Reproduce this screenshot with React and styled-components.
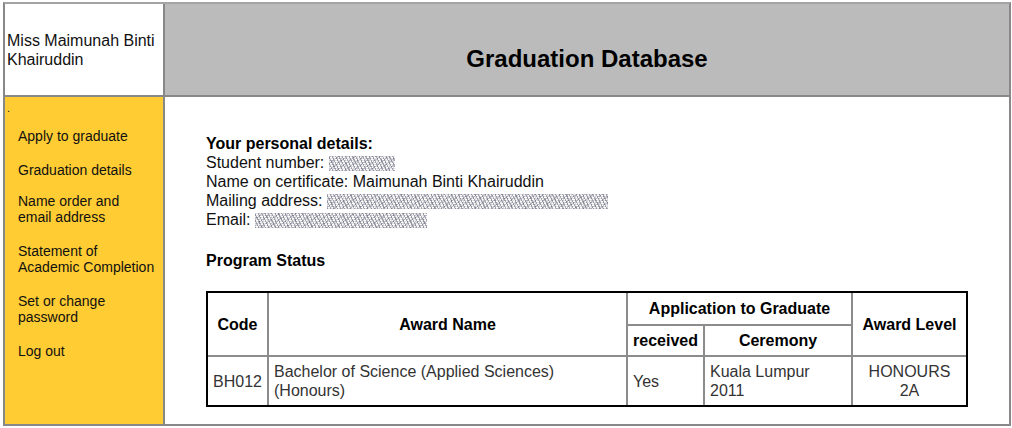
import React from "react";
import styled, { createGlobalStyle } from "styled-components";

const GlobalStyle = createGlobalStyle`
	html, body {
		margin: 0;
		background: #fff;
	}
	body {
		padding: 2px 0 0 3px;
		font-family: Arial, "Liberation Sans", sans-serif;
		color: #111;
	}
`

const Frame = styled.div`
	box-sizing: border-box;
	width: 1008px;
	height: 424px;
	display: grid;
	grid-template-columns: 158px 1fr;
	grid-template-rows: 91px 1fr;
	gap: 2px;
	background: #888;
	border: 2px solid #888;
	border-top-color: #a4a4a4;
`

const UserCell = styled.div`
	background: #fff;
	display: flex;
	align-items: center;
	padding: 0 2px;
	font-size: 16px;
	line-height: 19px;
`

const TitleCell = styled.div`
	background: #bbb;
	display: flex;
	align-items: center;
	justify-content: center;
	padding-top: 18px;
`

const Title = styled.h1`
	margin: 0;
	font-size: 24px;
	font-weight: bold;
	color: #000;
`

const Sidebar = styled.div`
	background: #ffcc33;
	padding: 2px;
	font-size: 14px;
	line-height: 16px;
`

const Dot = styled.div`
	font-size: 11px;
	line-height: 12px;
	padding-top: 3px;
`

const Menu = styled.nav`
	margin: 14px 0 0 11px;
	display: flex;
	flex-direction: column;
	gap: 18px;
`

const MenuItem = styled.a`
	display: block;
	color: #111;
	text-decoration: none;
	cursor: pointer;
	margin-top: ${props => props.$shift || 0}px;
`

const Main = styled.div`
	background: #fff;
	padding: 37px 0 0 41px;
	font-size: 16px;
	line-height: 19px;
`

const Heading = styled.div`
	font-weight: bold;
	color: #000;
	margin-top: ${props => props.$gap || 0}px;
`

const Line = styled.div``

const Blur = styled.span`
	display: inline-block;
	width: ${props => props.$w}px;
	height: 15px;
	vertical-align: -3px;
	background:
		repeating-linear-gradient(63deg, rgba(70, 70, 90, 0.45) 0 1px, transparent 1px 3px),
		repeating-linear-gradient(-37deg, rgba(120, 120, 150, 0.4) 0 1px, transparent 1px 5px),
		repeating-linear-gradient(90deg, rgba(150, 150, 160, 0.3) 0 1px, transparent 1px 4px),
		repeating-linear-gradient(0deg, rgba(160, 160, 170, 0.3) 0 1px, transparent 1px 2px);
`

const TableWrap = styled.div`
	width: 758px;
	border: 2px solid #000;
	margin-top: 21px;
`

const Table = styled.table`
	width: 100%;
	border-collapse: collapse;
	border-style: hidden;
	table-layout: fixed;
`

const Th = styled.th`
	border: 2px solid #8c8c8c;
	font-size: 16px;
	line-height: 19px;
	font-weight: bold;
	color: #000;
	text-align: center;
	padding: ${props => props.$pad || 6}px 2px;
`

const Td = styled.td`
	border: 2px solid #8c8c8c;
	font-size: 16px;
	line-height: 19px;
	color: #333;
	text-align: ${props => props.$align || "left"};
	padding: 5px 5px;
	vertical-align: middle;
`

const menu = [
	{ lines: ["Apply to graduate"] },
	{ lines: ["Graduation details"] },
	{ lines: ["Name order and", "email address"], shift: -3 },
	{ lines: ["Statement of", "Academic Completion"] },
	{ lines: ["Set or change", "password"] },
	{ lines: ["Log out"] },
]

const App = () => (
	<>
		<GlobalStyle />
		<Frame>
			<UserCell>Miss Maimunah Binti<br />Khairuddin</UserCell>
			<TitleCell>
				<Title>Graduation Database</Title>
			</TitleCell>
			<Sidebar>
				<Dot>.</Dot>
				<Menu>
					{menu.map(item => (
						<MenuItem key={item.lines[0]} $shift={item.shift}>
							{item.lines.map((l, i) => (
								<React.Fragment key={l}>
									{i > 0 && <br />}
									{l}
								</React.Fragment>
							))}
						</MenuItem>
					))}
				</Menu>
			</Sidebar>
			<Main>
				<Heading>Your personal details:</Heading>
				<Line>Student number: <Blur $w={66} /></Line>
				<Line>Name on certificate: Maimunah Binti Khairuddin</Line>
				<Line>Mailing address: <Blur $w={281} /></Line>
				<Line>Email: <Blur $w={172} /></Line>
				<Heading $gap={22}>Program Status</Heading>
				<TableWrap>
					<Table>
						<colgroup>
							<col style={{ width: 60 }} />
							<col style={{ width: 359 }} />
							<col style={{ width: 77 }} />
							<col style={{ width: 148 }} />
							<col style={{ width: 114 }} />
						</colgroup>
						<thead>
							<tr>
								<Th rowSpan={2}>Code</Th>
								<Th rowSpan={2}>Award Name</Th>
								<Th colSpan={2}>Application to Graduate</Th>
								<Th rowSpan={2}>Award Level</Th>
							</tr>
							<tr>
								<Th $pad={5}>received</Th>
								<Th $pad={5}>Ceremony</Th>
							</tr>
						</thead>
						<tbody>
							<tr>
								<Td>BH012</Td>
								<Td>Bachelor of Science (Applied Sciences)<br />(Honours)</Td>
								<Td>Yes</Td>
								<Td>Kuala Lumpur<br />2011</Td>
								<Td $align="center">HONOURS<br />2A</Td>
							</tr>
						</tbody>
					</Table>
				</TableWrap>
			</Main>
		</Frame>
	</>
)

export default App
